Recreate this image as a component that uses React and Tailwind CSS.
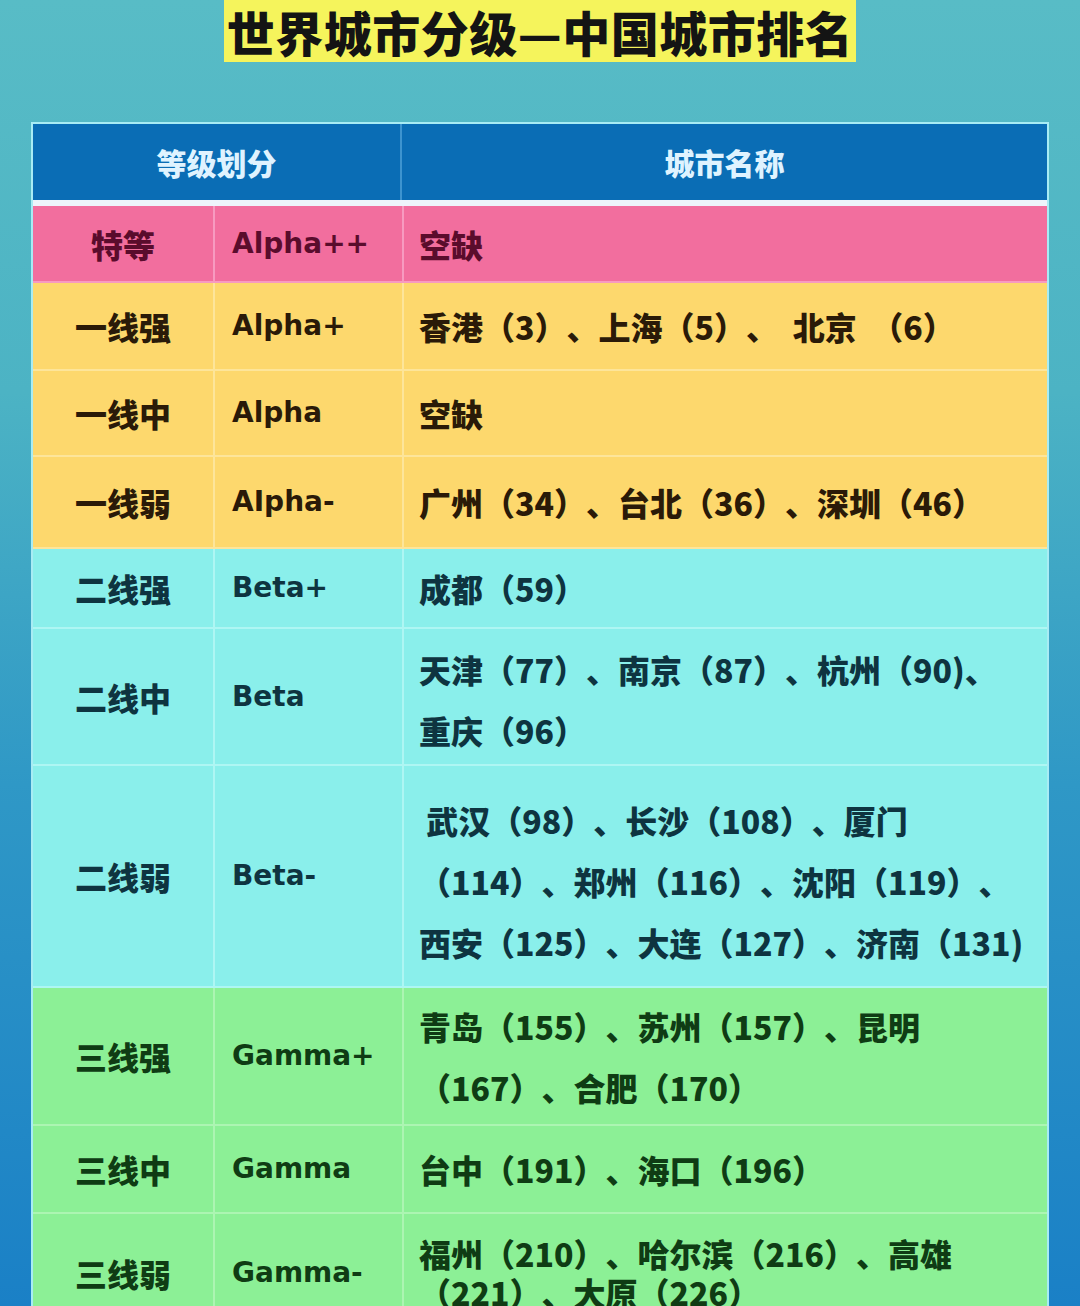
import React from "react";

const CJK = { fontFamily: '"Noto Sans CJK SC", "Noto Sans", sans-serif' };
const LAT = { fontFamily: '"DejaVu Sans", "Noto Sans", sans-serif' };

const sections = [
  {
    bg: "bg-[#f26e9e]",
    text: "text-[#5a0c2c]",
    line: "border-[#f79ac0]",
    rows: [{ h: "h-[75px]", c1: "特等", c2: "Alpha++", c3: ["空缺"] }],
  },
  {
    bg: "bg-[#fdd86d]",
    text: "text-[#2a1a08]",
    line: "border-[#fde59a]",
    rows: [
      { h: "h-[88px]", c1: "一线强", c2: "Alpha+", c3: ["香港（3）、上海（5）、  北京  （6）"] },
      { h: "h-[86px]", c1: "一线中", c2: "Alpha", c3: ["空缺"] },
      { h: "h-[90px]", c1: "一线弱", c2: "AIpha-", c3: ["广州（34）、台北（36）、深圳（46）"] },
    ],
  },
  {
    bg: "bg-[#8aefeb]",
    text: "text-[#0e3440]",
    line: "border-[#aef6f3]",
    rows: [
      { h: "h-[80px]", c1: "二线强", c2: "Beta+", c3: ["成都（59）"] },
      { h: "h-[137px]", c1: "二线中", c2: "Beta", c3: ["天津（77）、南京（87）、杭州（90)、", "重庆（96）"], pt: "pt-[6px]" },
      {
        h: "h-[220px]",
        c1: "二线弱",
        c2: "Beta-",
        c3: ["\u00a0武汉（98）、长沙（108）、厦门", "（114）、郑州（116）、沈阳（119）、", "西安（125）、大连（127）、济南（131)"],
        pt: "pt-[10px]",
      },
    ],
  },
  {
    bg: "bg-[#8cf096]",
    text: "text-[#0f3c14]",
    line: "border-[#acf5b2]",
    rows: [
      { h: "h-[138px]", c1: "三线强", c2: "Gamma+", c3: ["青岛（155）、苏州（157）、昆明", "（167）、合肥（170）"], pt: "pt-[2px]" },
      { h: "h-[88px]", c1: "三线中", c2: "Gamma", c3: ["台中（191）、海口（196）"] },
      { h: "h-[118px]", c1: "三线弱", c2: "Gamma-", c3: ["福州（210）、哈尔滨（216）、高雄", "（221）、大原（226）"], tight: true },
    ],
  },
];

function Section({ s, last }) {
  return (
    <div className={`${s.bg} ${s.text} ${last ? "" : "border-b-2"} ${s.line}`}>
      {s.rows.map((r, i) => (
        <div
          key={i}
          className={`grid grid-cols-[182px_189px_1fr] ${r.h} ${i < s.rows.length - 1 ? "border-b-2" : ""} ${s.line}`}
        >
          <div
            className={`flex items-center justify-center border-r-2 ${s.line} text-[32px] font-black`}
            style={CJK}
          >
            {r.c1}
          </div>
          <div
            className={`flex items-center pl-[17px] border-r-2 ${s.line} text-[28px] font-bold`}
            style={LAT}
          >
            {r.c2}
          </div>
          <div className={`flex flex-col justify-center pl-[15px] ${r.pt || ""}`}>
            {r.c3.map((t, j) => (
              <div
                key={j}
                className={`${r.c3.length > 1 ? (r.tight ? "leading-[39px]" : "leading-[61px]") : "leading-[40px]"} text-[32px] font-black whitespace-pre [text-spacing-trim:space-all]`}
                style={CJK}
              >
                {t}
              </div>
            ))}
          </div>
        </div>
      ))}
    </div>
  );
}

export default function App() {
  return (
    <div className="w-[1080px] h-[1306px] overflow-hidden [text-spacing-trim:space-all] bg-[linear-gradient(to_bottom,#58bcc6_0%,#4cb3c4_30%,#2f98c6_60%,#1a80c6_100%)]">
      <div className="flex justify-center">
        <div className="bg-[#f5f45c] h-[62px] px-[3px] flex items-center">
          <div className="text-[48px] font-black leading-[62px] text-[#141414] tracking-[0.5px]" style={CJK}>
            世界城市分级—中国城市排名
          </div>
        </div>
      </div>
      <div className="mt-[60px] mx-[31px] border-x-2 border-t-2 border-[#a8ecf4]">
        <div className="grid grid-cols-[369px_1fr] h-[76px] bg-[#0a6db5] text-[#dff3ff]">
          <div className="flex items-center justify-center border-r-2 border-[#3d94cf] text-[30px] font-black" style={CJK}>
            等级划分
          </div>
          <div className="flex items-center justify-center text-[30px] font-black" style={CJK}>
            城市名称
          </div>
        </div>
        <div className="h-[6px] bg-[#eef4fb]" />
        {sections.map((s, i) => (
          <Section key={i} s={s} last={i === sections.length - 1} />
        ))}
      </div>
    </div>
  );
}
